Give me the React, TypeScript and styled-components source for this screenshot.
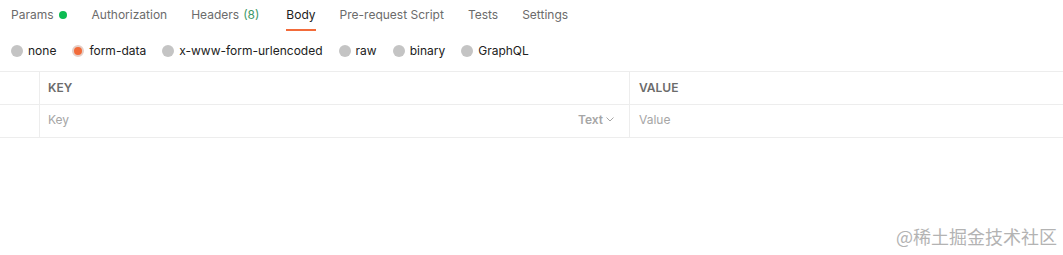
import React from "react";
import styled, { createGlobalStyle } from "styled-components";

const Global = createGlobalStyle`
  html, body { margin: 0; padding: 0; background: #fff; }
  body { font-family: Inter, "Noto Sans", sans-serif; color: #212121; }
`;

const tabs = [
  { label: "Params", dot: true },
  { label: "Authorization" },
  { label: "Headers", count: "(8)" },
  { label: "Body", active: true },
  { label: "Pre-request Script" },
  { label: "Tests" },
  { label: "Settings" },
];

const bodyTypes = ["none", "form-data", "x-www-form-urlencoded", "raw", "binary", "GraphQL"];

export default function App() {
  return (
    <Page>
      <Global />
      <TabBar>
        {tabs.map((t) => (
          <Tab key={t.label} active={t.active}>
            {t.label}
            {t.count && <Count>{t.count}</Count>}
            {t.dot && <Dot />}
          </Tab>
        ))}
      </TabBar>
      <RadioRow>
        {bodyTypes.map((b) => (
          <RadioItem key={b}>
            <Radio checked={b === "form-data"} />
            {b}
          </RadioItem>
        ))}
      </RadioRow>
      <Table>
        <Row>
          <CheckCell />
          <Cell head>KEY</Cell>
          <Cell head last>VALUE</Cell>
        </Row>
        <Row>
          <CheckCell />
          <Cell>
            <Placeholder>Key</Placeholder>
            <TypeSelect>
              Text
              <svg width="8" height="5" viewBox="0 0 8 5" fill="none">
                <path d="M0.5 0.5l3.5 3.5L7.5 0.5" stroke="#a6a6a6" strokeWidth="1" />
              </svg>
            </TypeSelect>
          </Cell>
          <Cell last>
            <Placeholder>Value</Placeholder>
          </Cell>
        </Row>
      </Table>
      <Watermark>@稀土掘金技术社区</Watermark>
    </Page>
  );
}

const Page = styled.div`
  width: 1063px;
  height: 255px;
  position: relative;
  overflow: hidden;
`;

const TabBar = styled.div`
  display: flex;
  gap: 24px;
  padding: 0 0 0 11px;
  height: 31px;
`;

const Tab = styled.div<{ active?: boolean }>`
  display: flex;
  align-items: center;
  font-size: 12px;
  color: ${(p) => (p.active ? "#212121" : "#6b6b6b")};
  height: 29px;
  border-bottom: 2px solid ${(p) => (p.active ? "#f26b3a" : "transparent")};
`;

const Count = styled.span`
  color: #3d9a68;
  margin: 0 3px 0 4px;
`;

const Dot = styled.span`
  width: 8px;
  height: 8px;
  border-radius: 50%;
  background: #0cbb52;
  margin: 0 1px 0 5px;
`;

const RadioRow = styled.div`
  display: flex;
  gap: 16px;
  padding: 0 0 0 11px;
  height: 39px;
  align-items: center;
`;

const RadioItem = styled.label`
  display: flex;
  align-items: center;
  gap: 5px;
  font-size: 12px;
  color: #212121;
`;

const Radio = styled.span<{ checked?: boolean }>`
  width: 12px;
  height: 12px;
  border-radius: 50%;
  box-sizing: border-box;
  background: ${(p) => (p.checked ? "#f26b3a" : "#c4c4c4")};
  border: ${(p) => (p.checked ? "2px solid #e6cfc7" : "none")};
`;

const Table = styled.div`
  border-top: 1px solid #ededed;
  margin-top: 1px;
`;

const Row = styled.div`
  display: grid;
  grid-template-columns: 40px 590px 1fr;
  height: 32px;
  border-bottom: 1px solid #ededed;
`;

const CheckCell = styled.div`
  border-right: 1px solid #ededed;
`;

const Cell = styled.div<{ head?: boolean; last?: boolean }>`
  display: flex;
  align-items: center;
  justify-content: space-between;
  padding: 0 15px ${(p) => (p.head ? "1px" : "3px")} ${(p) => (p.last ? "9px" : "8px")};
  font-size: 12px;
  font-weight: ${(p) => (p.head ? 600 : 400)};
  color: #6b6b6b;
  border-right: ${(p) => (p.last ? "none" : "1px solid #ededed")};
`;

const Placeholder = styled.span`
  color: #a6a6a6;
`;

const TypeSelect = styled.span`
  display: flex;
  align-items: center;
  gap: 3px;
  font-weight: 600;
  color: #a6a6a6;
`;

const Watermark = styled.div`
  position: absolute;
  right: 6px;
  bottom: 6px;
  font-family: "Noto Sans CJK SC", sans-serif;
  font-size: 18px;
  color: #b3b3b3;
`;
